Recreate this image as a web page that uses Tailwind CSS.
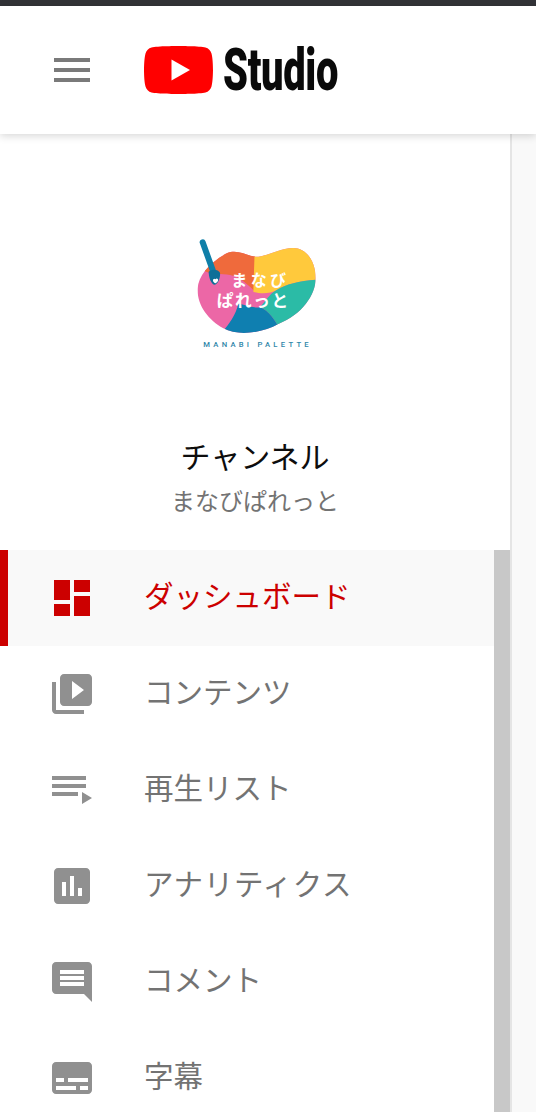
<!DOCTYPE html>
<html lang="ja">
<head>
    <meta charset="UTF-8">
    <title>YouTube Studio</title>
    <script src="https://cdn.jsdelivr.net/npm/@tailwindcss/browser@4"></script>
</head>
<body class="h-screen overflow-hidden bg-[#f9f9f9] font-['Noto_Sans_CJK_JP','Noto_Sans',sans-serif]">
    <div class="flex h-full flex-col">
        <div class="h-[6px] shrink-0 bg-[#323337]"></div>

        <!-- Header -->
        <header class="relative z-10 flex h-[128px] shrink-0 items-center bg-white shadow-[0_2px_8px_rgba(0,0,0,0.16)]">
            <button class="ml-[54px] flex w-[36px] flex-col gap-[6px]">
                <span class="block h-[4px] bg-[#7a7a7a]"></span>
                <span class="block h-[4px] bg-[#7a7a7a]"></span>
                <span class="block h-[4px] bg-[#7a7a7a]"></span>
            </button>
            <svg class="ml-[54px] shrink-0" width="69" height="48" viewBox="0 0 69 48">
                <path fill="#ff0000" d="M67.500 7.500C66.700 4.600 64.400 2.300 61.500 1.500 56.100 0 34.500 0 34.500 0S12.900 0 7.500 1.500C4.600 2.300 2.300 4.600 1.500 7.500 0 12.900 0 24 0 24s0 11.100 1.500 16.500c.8 2.900 3.100 5.200 6 6C12.900 48 34.500 48 34.500 48s21.600 0 27-1.500c2.900-.8 5.200-3.100 6-6C69 35.100 69 24 69 24s0-11.100-1.500-16.500z"/>
                <path fill="#ffffff" d="M27.500 34.500 46 24 27.500 13.500z"/>
            </svg>
            <span class="ml-[10px] inline-block w-[113px] origin-left scale-x-[0.665] font-['Roboto'] text-[60px] leading-none font-black tracking-[-0.5px] whitespace-nowrap text-[#0a0a0a]">Studio</span>
        </header>

        <div class="flex min-h-0 flex-1">
            <aside class="flex w-[512px] shrink-0 flex-col border-r-2 border-[#e5e5e5] bg-white">
                <!-- Channel -->
                <div class="flex h-[416px] shrink-0 flex-col items-center">
                    <svg class="mt-[86px] shrink-0" width="170" height="140" viewBox="0 0 510 420">
                        <defs>
                            <clipPath id="blob">
                                <path d="M83 205C85 170 115 130 170 100C205 85 235 112 265 110C300 106 330 85 370 84C410 84 437 125 437 175C437 225 395 285 325 312C280 338 205 350 160 325C115 300 80 255 83 205Z"/>
                            </clipPath>
                        </defs>
                        <g clip-path="url(#blob)">
                            <rect width="510" height="420" fill="#ec67a6"/>
                            <path fill="#ef6a3c" d="M60 60H255V215C235 195 210 170 180 165C155 160 125 165 95 150L60 120Z"/>
                            <path fill="#ffc93c" d="M255 60H460V178C400 180 350 190 320 210C300 222 270 222 250 215Z"/>
                            <path fill="#2bbba6" d="M460 178V340H335C320 305 295 270 270 262C285 245 300 220 320 210C350 190 400 180 460 178Z"/>
                            <path fill="#0f7fb0" d="M270 262C295 270 320 305 335 340V370H130C160 330 195 300 205 250C225 255 250 265 270 262Z"/>
                        </g>
                        <path d="M98 67 128 150" stroke="#0f7fa8" stroke-width="18" stroke-linecap="round" fill="none"/>
                        <path fill="#0f6f98" d="M116 155C128 146 144 148 150 158C152 172 144 194 132 194C122 190 116 170 116 155Z"/>
                        <path fill="#ffffff" d="M136 178c4-5 10-1 8 4-2 4-5 6-8 8-3-2-6-4-7-8-1-5 5-8 7-4z"/>
                        <text x="184" y="197" fill="#ffffff" font-size="48" font-weight="700" letter-spacing="10">まなび</text>
                        <text x="140" y="262" fill="#ffffff" font-size="50" font-weight="700" letter-spacing="5">ぱれっと</text>
                        <text x="100" y="381" fill="#2f86a8" font-family="Roboto" font-size="23" font-weight="500" textLength="316">MANABI PALETTE</text>
                    </svg>
                    <p class="mt-[73px] text-[30px] leading-[44px] text-[#0d0d0d]">チャンネル</p>
                    <p class="mt-[5px] text-[24px] leading-[36px] text-[#737373]">まなびぱれっと</p>
                </div>

                <!-- Nav -->
                <div class="flex min-h-0 flex-1">
                    <nav class="min-w-0 flex-1">
                        <a class="flex h-[96px] items-center border-l-[8px] border-[#cc0000] bg-[#f9f9f9] pl-[40px] text-[#cc0000]">
                            <svg width="48" height="48" viewBox="0 0 24 24" fill="currentColor"><path d="M3 13h8V3H3v10zm0 8h8v-6H3v6zm10 0h8V11h-8v10zm0-18v6h8V3h-8z"/></svg>
                            <span class="mb-[8px] ml-[48px] text-[29.500px] whitespace-nowrap">ダッシュボード</span>
                        </a>
                        <a class="flex h-[96px] items-center pl-[48px] text-[#737373]">
                            <svg class="text-[#909090]" width="48" height="48" viewBox="0 0 24 24" fill="currentColor"><path d="M4 6H2v14c0 1.100.9 2 2 2h14v-2H4V6zm16-4H8c-1.100 0-2 .9-2 2v12c0 1.100.9 2 2 2h12c1.100 0 2-.9 2-2V4c0-1.100-.9-2-2-2zm-8 12.500v-9l6 4.500-6 4.500z"/></svg>
                            <span class="mb-[8px] ml-[48px] text-[29.500px] whitespace-nowrap">コンテンツ</span>
                        </a>
                        <a class="flex h-[96px] items-center pl-[48px] text-[#737373]">
                            <svg class="text-[#909090]" width="48" height="48" viewBox="0 0 24 24" fill="currentColor"><path d="M19 9H2v2h17V9zm0-4H2v2h17V5zM2 15h13v-2H2v2zm15-2v6l5-3-5-3z"/></svg>
                            <span class="mb-[8px] ml-[48px] text-[29.500px] whitespace-nowrap">再生リスト</span>
                        </a>
                        <a class="flex h-[96px] items-center pl-[48px] text-[#737373]">
                            <svg class="text-[#909090]" width="48" height="48" viewBox="0 0 24 24" fill="currentColor"><path d="M19 3H5c-1.100 0-2 .9-2 2v14c0 1.100.9 2 2 2h14c1.100 0 2-.9 2-2V5c0-1.100-.9-2-2-2zM9 17H7v-7h2v7zm4 0h-2V7h2v10zm4 0h-2v-4h2v4z"/></svg>
                            <span class="mb-[8px] ml-[48px] text-[29.500px] tracking-[0.7px] whitespace-nowrap">アナリティクス</span>
                        </a>
                        <a class="flex h-[96px] items-center pl-[48px] text-[#737373]">
                            <svg class="text-[#909090]" width="48" height="48" viewBox="0 0 24 24" fill="currentColor"><path d="M21.990 4c0-1.100-.89-2-1.990-2H4c-1.100 0-2 .9-2 2v12c0 1.100.9 2 2 2h14l4 4-.01-18zM18 14H6v-2h12v2zm0-3H6V9h12v2zm0-3H6V6h12v2z"/></svg>
                            <span class="mb-[8px] ml-[48px] text-[29.500px] whitespace-nowrap">コメント</span>
                        </a>
                        <a class="flex h-[96px] items-center pl-[48px] text-[#737373]">
                            <svg class="text-[#909090]" width="48" height="48" viewBox="0 0 24 24" fill="currentColor"><path d="M20 4H4c-1.100 0-2 .9-2 2v12c0 1.100.9 2 2 2h16c1.100 0 2-.9 2-2V6c0-1.100-.9-2-2-2zM4 12h4v2H4v-2zm10 6H4v-2h10v2zm6 0h-4v-2h4v2zm0-4H10v-2h10v2z"/></svg>
                            <span class="mb-[8px] ml-[48px] text-[29.500px] whitespace-nowrap">字幕</span>
                        </a>
                    </nav>
                    <div class="w-[16px] shrink-0 bg-[#c8c8c8]"></div>
                </div>
            </aside>
        </div>
    </div>
</body>
</html>
